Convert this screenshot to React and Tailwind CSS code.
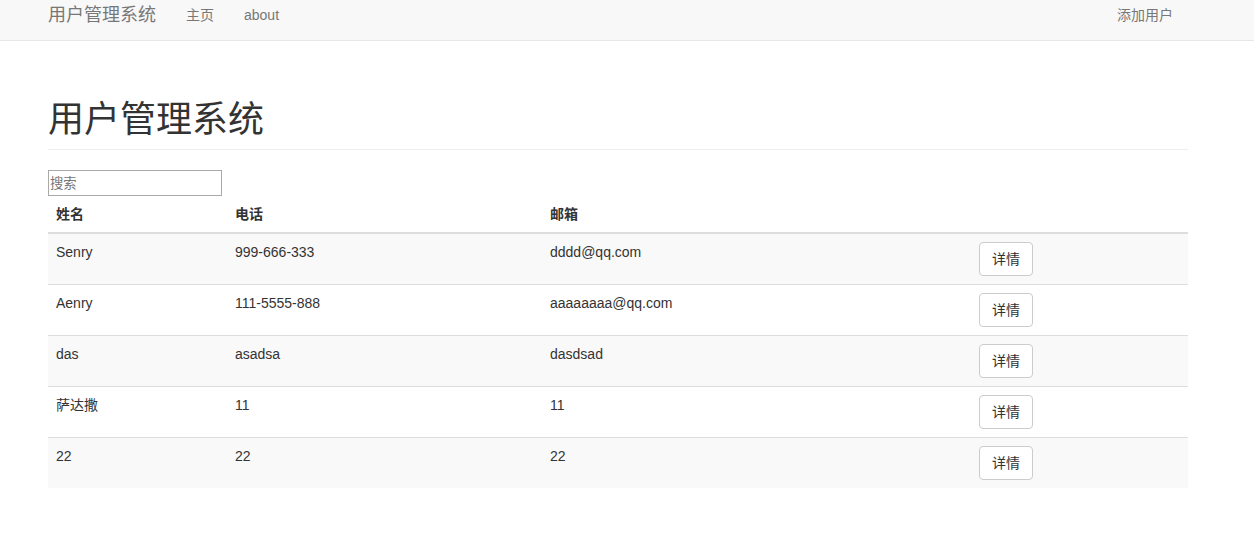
import React from "react";

const rows = [
  ["Senry", "999-666-333", "dddd@qq.com"],
  ["Aenry", "111-5555-888", "aaaaaaaa@qq.com"],
  ["das", "asadsa", "dasdsad"],
  ["萨达撒", "11", "11"],
  ["22", "22", "22"],
];

const font = {
  fontFamily:
    '"Liberation Sans", Arial, "Noto Sans CJK SC", sans-serif',
};

export default function App() {
  return (
    <div className="min-h-[547px] bg-white text-[#333] text-[14px] leading-5" style={font}>
      <nav className="h-[41px] bg-[#f8f8f8] border-b border-[#e7e7e7]">
        <div className="ml-[48px] w-[1140px] pt-[5px] flex items-start">
          <span className="text-[18px] leading-5 text-[#777] pr-[15px]">用户管理系统</span>
          <span className="px-[15px] text-[#777]">主页</span>
          <span className="px-[15px] text-[#777]">about</span>
          <span className="ml-auto pr-[15px] text-[#777]">添加用户</span>
        </div>
      </nav>
      <div className="ml-[48px] w-[1140px]">
        <div className="mt-[59px] pb-[9px] border-b border-[#eee]">
          <h1 className="text-[36px] leading-[40px] font-normal">用户管理系统</h1>
        </div>
        <input
          className="mt-[20px] block w-[174px] h-[26px] border border-[#a9a9a9] px-[1px] text-[13.33px] placeholder:text-[#757575] outline-none"
          placeholder="搜索"
        />
        <table className="w-full border-collapse">
          <thead>
            <tr>
              <th className="w-[179px] text-left font-bold p-2 border-b-2 border-[#ddd]">姓名</th>
              <th className="w-[315px] text-left font-bold p-2 border-b-2 border-[#ddd]">电话</th>
              <th className="w-[429px] text-left font-bold p-2 border-b-2 border-[#ddd]">邮箱</th>
              <th className="text-left font-bold p-2 border-b-2 border-[#ddd]"></th>
            </tr>
          </thead>
          <tbody>
            {rows.map((r, i) => (
              <tr key={i} className={i % 2 === 0 ? "bg-[#f9f9f9]" : "bg-white"}>
                <td className={`p-2 align-top ${i > 0 ? "border-t border-[#ddd]" : ""}`}>{r[0]}</td>
                <td className={`p-2 align-top ${i > 0 ? "border-t border-[#ddd]" : ""}`}>{r[1]}</td>
                <td className={`p-2 align-top ${i > 0 ? "border-t border-[#ddd]" : ""}`}>{r[2]}</td>
                <td className={`p-2 align-top ${i > 0 ? "border-t border-[#ddd]" : ""}`}>
                  <button className="h-[34px] px-3 border border-[#ccc] rounded bg-white text-[#333] leading-5">
                    详情
                  </button>
                </td>
              </tr>
            ))}
          </tbody>
        </table>
      </div>
    </div>
  );
}
